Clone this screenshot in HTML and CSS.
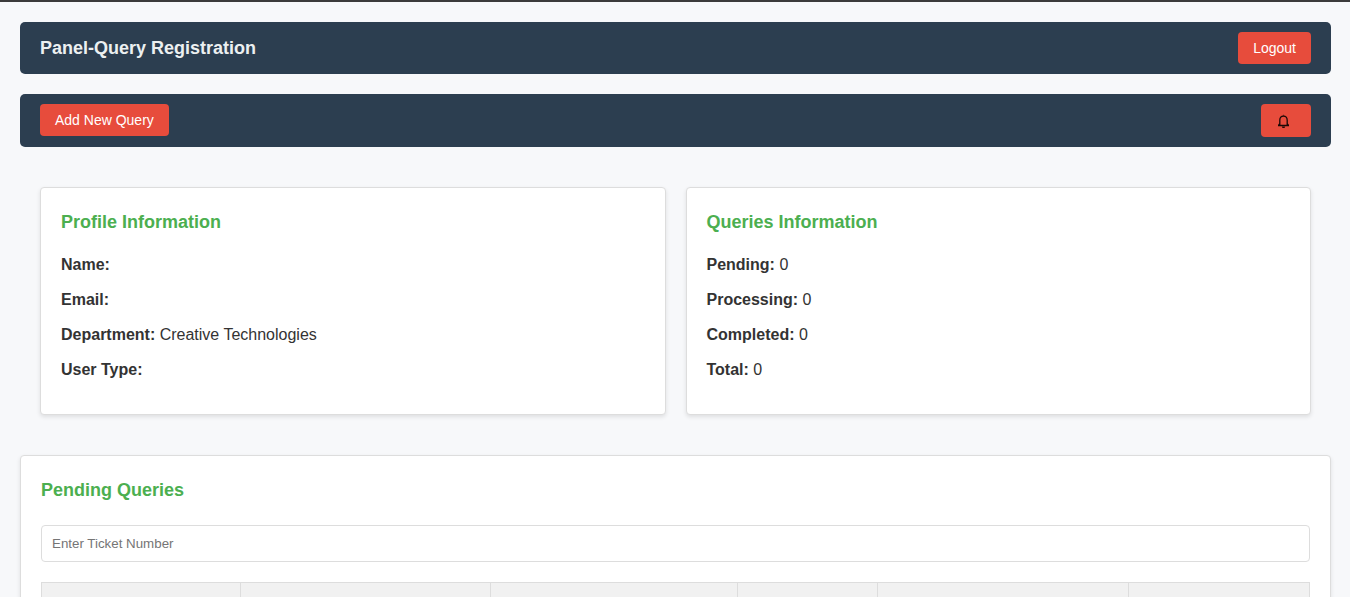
FILE: index.html
```html
<!DOCTYPE html>
<html lang="en">
<head>
<meta charset="utf-8">
<title>Panel-Query Registration</title>
<link rel="stylesheet" href="styles.css">
</head>
<body>
<header class="bar">
  <h1 class="bar-title">Panel-Query Registration</h1>
  <button class="btn" type="button">Logout</button>
</header>
<nav class="bar">
  <button class="btn" type="button">Add New Query</button>
  <button class="btn btn-bell" type="button" aria-label="Notifications">
    <svg class="bell" viewBox="0 0 16 16" fill="none" stroke="currentColor" stroke-width="1.3" aria-hidden="true"><path d="M3 12.5h11M4.8 12.2V7.2C4.8 4.6 6.2 3.1 8.5 3.1s3.7 1.5 3.7 4.1v5M3.6 12.2l1.2-1.6M13.4 12.2l-1.2-1.6"/><path d="M7.7 2.6a.8.8 0 0 1 1.6 0zM6.8 13.4h3.4a1.7 1.7 0 0 1-3.4 0z" fill="currentColor" stroke="none"/></svg>
  </button>
</nav>
<main>
  <div class="cards">
    <section class="card">
      <h2 class="card-title">Profile Information</h2>
      <div class="facts">
        <p><strong>Name:</strong></p>
        <p><strong>Email:</strong></p>
        <p><strong>Department:</strong> Creative Technologies</p>
        <p><strong>User Type:</strong></p>
      </div>
    </section>
    <section class="card">
      <h2 class="card-title">Queries Information</h2>
      <div class="facts">
        <p><strong>Pending:</strong> 0</p>
        <p><strong>Processing:</strong> 0</p>
        <p><strong>Completed:</strong> 0</p>
        <p><strong>Total:</strong> 0</p>
      </div>
    </section>
  </div>
  <section class="card">
    <h2 class="card-title">Pending Queries</h2>
    <input class="search" type="text" placeholder="Enter Ticket Number" aria-label="Enter Ticket Number">
    <table class="queries">
      <colgroup><col class="col-a"><col class="col-b"><col class="col-c"><col class="col-d"><col class="col-e"><col></colgroup>
      <thead><tr><th></th><th></th><th></th><th></th><th></th><th></th></tr></thead>
    </table>
  </section>
</main>
</body>
</html>
```
FILE: styles.css
```css
* { box-sizing: border-box; }

body {
  margin: 0;
  padding: 20px 19px 20px 20px;
  border-top: 2px solid #3b3b3b;
  background: #f7f8fa;
  color: #333;
  font-family: "Liberation Sans", Arial, sans-serif;
  font-size: 16px;
  line-height: 25px;
}

h1, h2, p { margin: 0; }

.bar {
  display: flex;
  justify-content: space-between;
  align-items: flex-start;
  margin-bottom: 20px;
  padding: 10px 20px;
  border-radius: 5px;
  background: #2c3e50;
}

.bar-title {
  color: #ecf0f1;
  font-size: 18px;
  line-height: 32px;
}

.btn {
  padding: 8px 15px;
  border: 0;
  border-radius: 4px;
  background: #e74c3c;
  color: #fff;
  font-family: inherit;
  font-size: 14px;
  line-height: 16px;
  cursor: pointer;
}

.btn-bell {
  display: flex;
  width: 50px;
  padding: 9px 14px 8px;
  color: #1c0907;
}

.bell { width: 16px; height: 16px; }

.cards {
  display: grid;
  grid-template-columns: 1fr 1fr;
  gap: 20px;
  margin: 40px 0;
  padding: 0 20px;
}

.card {
  padding: 20px;
  border: 1px solid #ddd;
  border-radius: 4px;
  background: #fff;
  box-shadow: 0 2px 4px rgba(0, 0, 0, 0.1);
}

.card-title {
  color: #4caf50;
  font-size: 18px;
  line-height: 29px;
}

.facts {
  display: flex;
  flex-direction: column;
  gap: 10px;
  padding: 15px 0 12px;
}

.search {
  display: block;
  width: 100%;
  margin: 20px 0;
  padding: 10px;
  border: 1px solid #ddd;
  border-radius: 4px;
  background: #fff;
  font-family: inherit;
  line-height: 15px;
}

.search::placeholder { color: #757575; }

.queries {
  width: 100%;
  table-layout: fixed;
  border-collapse: collapse;
}

.queries th {
  height: 46px;
  border: 1px solid #ddd;
  background: #f1f1f1;
}

.col-a { width: 15.7%; }
.col-b { width: 19.7%; }
.col-c { width: 19.5%; }
.col-d { width: 11%; }
.col-e { width: 19.8%; }
```
